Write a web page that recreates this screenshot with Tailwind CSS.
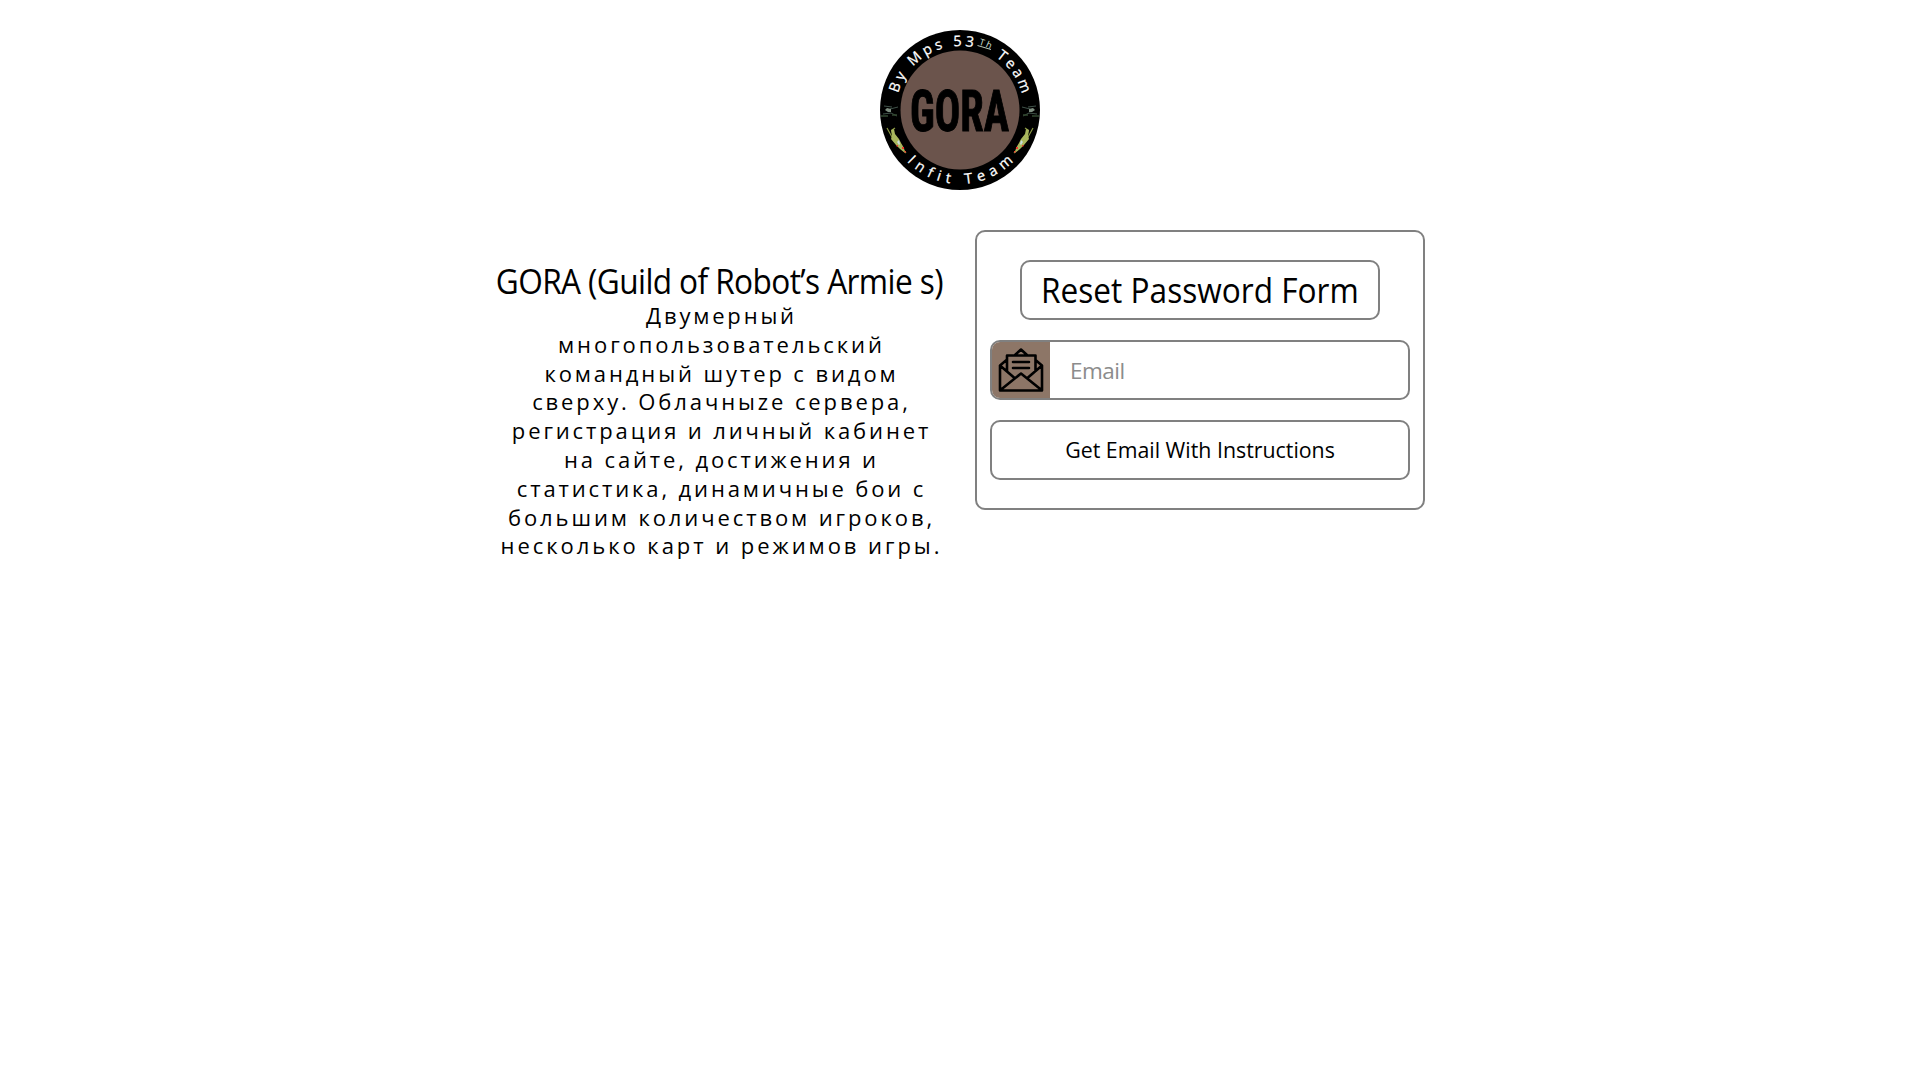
<!DOCTYPE html>
<html lang="ru">
<head>
<meta charset="utf-8">
<title>GORA</title>
<script src="https://cdn.jsdelivr.net/npm/@tailwindcss/browser@4"></script>
</head>
<body class="min-h-screen bg-white font-['Open_Sans','Noto_Sans',sans-serif] text-black">
<header class="flex justify-center pt-[30px]">
<svg class="size-40" viewBox="0 0 160 160">
  <defs>
    <path id="top" d="M16 80A64 64 0 0 1 144 80"/>
    <path id="bottom" d="M6 80A74 74 0 0 0 154 80"/>
    <g id="craft">
      <path d="M142 77l8 2M148 77l8-1M143 86l6-3 8 1" stroke="#40534a" stroke-width="1" fill="none"/>
      <path d="M149 79l4-1 2 2-3 2h-3z" fill="#7e8e80"/>
      <path d="M143 85h5M152 86h7" stroke="#31472f" stroke-width="1.5"/>
      <path d="M153 98L147.500 108 134 123M145 98l3 2-1 7" stroke="#8b9a43" stroke-width="1.200" fill="none"/>
      <path d="M146 99l3 1-1 6 1 3-5 6-4 4-5 4 1-5 3-5 2-4 4-5z" fill="#a9b75d"/>
      <path d="M141 110l2 2-2 3-1-1z" fill="#c9dde0"/>
      <path d="M136 117h2v2h-2zM142 115h1.500v1.500h-1.500zM134 121h1.500v1.500h-1.500z" fill="#ee3b2f"/>
    </g>
  </defs>
  <circle cx="80" cy="80" r="80"/>
  <circle cx="80" cy="80" r="59.500" fill="#6b544c"/>
  <g class="[font-variant-ligatures:none]" fill="#fff" font-size="14.500" stroke="#fff" stroke-width=".25">
    <text textLength="97"><textPath href="#top" startOffset="16.800" textLength="97">By Mps 53</textPath></text>
    <text font-size="9" textLength="12" fill="#dbe5dd" stroke="none"><textPath href="#top" startOffset="118" textLength="12"><tspan dy="-4">Th</tspan></textPath></text>
    <path d="M97.500 15.500l13.500 4" stroke="#b9c7bc" stroke-width="1"/>
    <text textLength="46"><textPath href="#top" startOffset="138.500" textLength="46">Team</textPath></text>
    <text textLength="119"><textPath href="#bottom" startOffset="56.800" textLength="119">Infit Team</textPath></text>
  </g>
  <text x="30" y="100.500" font-family="Roboto Condensed, Roboto, sans-serif" font-weight="700" font-size="57" stroke="#000" stroke-width="1" textLength="99" lengthAdjust="spacingAndGlyphs">GORA</text>
  <use href="#craft"/>
  <use href="#craft" transform="translate(160 0) scale(-1 1)"/>
</svg>
</header>
<main class="mx-auto mt-10 flex w-[930px] items-start gap-[30px]">
  <section class="flex w-[450px] flex-col items-center pt-8 text-[22px] leading-[28.8px] whitespace-nowrap">
    <h1 class="mr-0.5 flex h-[39px] scale-x-93 items-center text-[34px] tracking-[-0.65px]">GORA (Guild of Robot’s Armie s)</h1>
    <p class="ml-[3px] flex flex-col items-center">
      <span class="tracking-[2.82px]">Двумерный</span>
      <span class="tracking-[2.93px]">многопользовательский</span>
      <span class="tracking-[2.9px]">командный шутер с видом</span>
      <span class="tracking-[2.9px]">сверху. Облачныzе сервера,</span>
      <span class="tracking-[2.87px]">регистрация и личный кабинет</span>
      <span class="tracking-[2.87px]">на сайте, достижения и</span>
      <span class="tracking-[2.87px]">статистика, динамичные бои с</span>
      <span class="tracking-[2.9px]">большим количеством игроков,</span>
      <span class="tracking-[2.95px]">несколько карт и режимов игры.</span>
    </p>
  </section>
  <form class="flex w-[450px] flex-col items-center gap-5 rounded-[10px] border-2 border-[#808080] px-[13px] py-7">
    <h2 class="flex h-[60px] w-[360px] items-center justify-center rounded-[10px] border-2 border-[#808080] text-[34px] whitespace-nowrap"><span class="scale-x-93">Reset Password Form</span></h2>
    <label class="flex h-[60px] w-full items-stretch overflow-hidden rounded-[10px] border-2 border-[#808080]">
      <span class="flex w-[58px] items-center justify-center bg-[#8d7667] pr-px">
        <svg class="h-[46px] w-[46px]" viewBox="0 0 46 46" fill="none" stroke="#000" stroke-width="2.600" stroke-linejoin="round" stroke-linecap="round">
          <path d="M8.500 13L2 18.500V43.500H44V18.500L37.500 13M2 18.500L16 30.500M44 18.500L30 30.500M2.500 43L23 26.500 43.500 43M9 24V8.500H37.500V24M17 8L23 2.500 29 8M15 15H31M15 21H31"/>
        </svg>
      </span>
      <input type="text" placeholder="Email" class="w-0 flex-1 bg-transparent pt-0.5 pl-5 text-[22.5px] tracking-[-0.5px] outline-none placeholder:text-[#8c8c8c]">
    </label>
    <button type="button" class="flex h-[60px] w-full items-center justify-center rounded-[10px] border-2 border-[#808080] pb-px text-[22px] whitespace-nowrap"><span class="scale-x-97">Get Email With Instructions</span></button>
  </form>
</main>
</body>
</html>
